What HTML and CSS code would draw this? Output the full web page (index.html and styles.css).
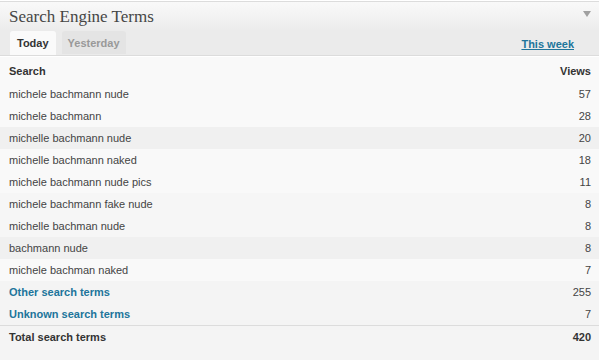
FILE: index.html
```html
<!DOCTYPE html>
<html>
<head>
<meta charset="utf-8">
<link rel="stylesheet" href="styles.css">
</head>
<body>
<div class="widget">
  <div class="head">
    <h3 class="title">Search Engine Terms</h3>
    <span class="toggle"></span>
  </div>
  <div class="tabbar">
    <div class="tabs">
      <span class="tab active">Today</span>
      <span class="tab">Yesterday</span>
    </div>
    <a class="week" href="#">This week</a>
  </div>
  <table class="stats">
    <thead>
      <tr><th class="l">Search</th><th class="r">Views</th></tr>
    </thead>
    <tbody>
      <tr><td>michele bachmann nude</td><td class="r">57</td></tr>
      <tr><td>michele bachmann</td><td class="r">28</td></tr>
      <tr class="dk"><td>michelle bachmann nude</td><td class="r">20</td></tr>
      <tr><td>michelle bachmann naked</td><td class="r">18</td></tr>
      <tr><td>michele bachmann nude pics</td><td class="r">11</td></tr>
      <tr class="md"><td>michele bachmann fake nude</td><td class="r">8</td></tr>
      <tr class="md"><td>michelle bachman nude</td><td class="r">8</td></tr>
      <tr class="dk"><td>bachmann nude</td><td class="r">8</td></tr>
      <tr><td>michele bachman naked</td><td class="r">7</td></tr>
      <tr class="gr"><td><a class="lnk" href="#">Other search terms</a></td><td class="r">255</td></tr>
      <tr class="gr"><td><a class="lnk" href="#">Unknown search terms</a></td><td class="r">7</td></tr>
    </tbody>
    <tfoot>
      <tr><th class="l">Total search terms</th><th class="r">420</th></tr>
    </tfoot>
  </table>
</div>
</body>
</html>
```
FILE: styles.css
```css
html, body { margin: 0; padding: 0; background: #fff; }
body { font-family: "Liberation Sans", Arial, sans-serif; font-size: 11px; color: #333; }
.widget {
  margin-top: 1px;
  border-top: 1px solid #dcdcdc;
  border-bottom: 1px solid #dcdcdc;
  background: #f9f9f9;
  width: 599px;
}
.head {
  height: 28px;
  background: linear-gradient(#f9f9f9, #ececec);
  display: flex;
  align-items: center;
  justify-content: space-between;
}
.title {
  margin: 0 0 0 9px;
  font-family: "Liberation Serif", "Times New Roman", serif;
  font-weight: normal;
  font-size: 17px;
  color: #464646;
  padding-top: 2px;
}
.toggle {
  width: 0; height: 0;
  border-left: 4px solid transparent;
  border-right: 4px solid transparent;
  border-top: 6px solid #a0a0a0;
  margin-right: 8px;
  margin-top: -4px;
}
.tabbar {
  height: 25px;
  background: #ebebeb;
  border-bottom: 1px solid #dcdcdc;
  display: flex;
  align-items: flex-end;
  justify-content: space-between;
}
.tabs { display: flex; gap: 6px; padding-left: 10px; }
.tab {
  font-weight: bold;
  color: #999;
  background: #e4e4e4;
  border-radius: 3px 3px 0 0;
  padding: 0 6px;
  height: 23px;
  line-height: 25px;
}
.tab.active { background: #fafafa; color: #333; height: 24px; padding: 0 7px; }
.week {
  color: #21759b;
  font-weight: bold;
  text-decoration: underline;
  margin-right: 25px;
  margin-bottom: 5px;
}
.stats {
  width: 100%;
  border-collapse: collapse;
  border-top: 1px solid #fff;
}
.stats th, .stats td { padding: 0 8px 0 9px; height: 22px; text-align: left; }
.stats td { color: #444; }
.stats thead th { height: 24px; padding-top: 2px; font-weight: bold; }
.stats .r { text-align: right; }
.stats tbody tr.dk td { background: #f0f0f0; }
.stats tbody tr.md td { background: #f6f6f6; }
.stats tbody tr.gr td { background: #f4f4f4; }
.lnk { color: #21759b; font-weight: bold; text-decoration: none; }
.stats tfoot th {
  border-top: 1px solid #dcdcdc;
  background: #f4f4f4;
  height: 31px;
  vertical-align: top;
  padding-top: 5px;
  font-weight: bold;
}
```
